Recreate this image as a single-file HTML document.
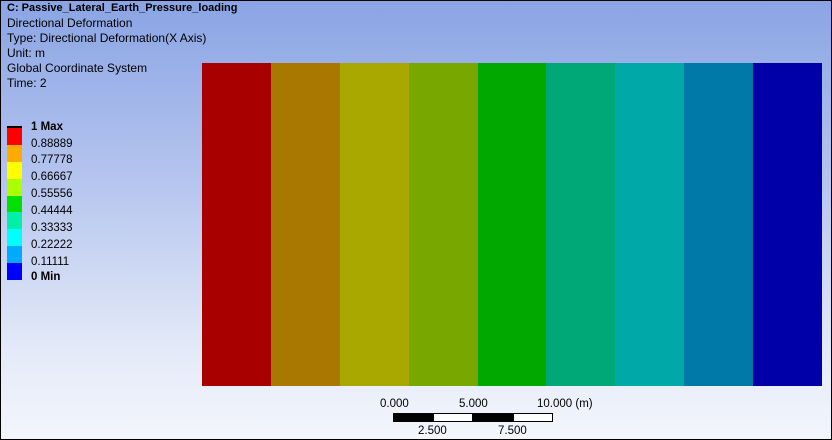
<!DOCTYPE html>
<html><head><style>
html,body{margin:0;padding:0}
body{width:832px;height:440px;position:relative;overflow:hidden;font-family:"Liberation Sans",sans-serif;
background:linear-gradient(to bottom,#8aa4e4 0%,#b4c4ee 40%,#e4eaf8 80%,#f4f6fc 100%);}
.frame{position:absolute;left:0;top:0;width:830px;height:438px;border:1px solid #000;}
.t{position:absolute;left:7px;font-size:12px;color:#000;line-height:15px;white-space:nowrap}
.plot{position:absolute;left:202px;top:63px;width:620px;height:323px;display:flex}
.plot div{flex:1}
.leg{position:absolute;left:7px;top:126px;width:15px}
.leg div{height:16.9px}
.lab{position:absolute;left:31px;font-size:11.5px;line-height:12px}
.sb{position:absolute;top:413px;height:9px;width:40px;box-sizing:border-box;border:1px solid #000}
.st{position:absolute;font-size:11.5px}
</style></head><body>
<div class="frame"></div>
<div class="t" style="top:1px;font-weight:bold;font-size:11px">C: Passive_Lateral_Earth_Pressure_loading</div>
<div class="t" style="top:16px">Directional Deformation</div>
<div class="t" style="top:31px">Type: Directional Deformation(X Axis)</div>
<div class="t" style="top:46px">Unit: m</div>
<div class="t" style="top:61px">Global Coordinate System</div>
<div class="t" style="top:76px">Time: 2</div>
<div class="plot">
<div style="background:#a80000"></div><div style="background:#a87800"></div><div style="background:#a8a800"></div>
<div style="background:#78a800"></div><div style="background:#00a800"></div><div style="background:#00a878"></div>
<div style="background:#00a8a8"></div><div style="background:#0078a8"></div><div style="background:#0000a8"></div>
</div>
<div class="leg" style="border-top:2px solid #000;">
<div style="background:#ff0000"></div><div style="background:#ffaa00"></div><div style="background:#ffff00"></div>
<div style="background:#aaff00"></div><div style="background:#00e000"></div><div style="background:#00f0aa"></div>
<div style="background:#00ffff"></div><div style="background:#00aaff"></div><div style="background:#0000ff"></div>
</div>
<div class="lab" style="top:121px;font-weight:bold">1 Max</div>
<div class="lab" style="top:138px">0.88889</div>
<div class="lab" style="top:154px">0.77778</div>
<div class="lab" style="top:171px">0.66667</div>
<div class="lab" style="top:188px">0.55556</div>
<div class="lab" style="top:205px">0.44444</div>
<div class="lab" style="top:222px">0.33333</div>
<div class="lab" style="top:239px">0.22222</div>
<div class="lab" style="top:256px">0.11111</div>
<div class="lab" style="top:271px;font-weight:bold">0 Min</div>
<div class="st" style="left:380px;top:398px">0.000</div>
<div class="st" style="left:459px;top:398px">5.000</div>
<div class="st" style="left:537px;top:398px">10.000 (m)</div>
<div class="sb" style="left:393px;background:#000"></div>
<div class="sb" style="left:433px;background:#fff"></div>
<div class="sb" style="left:473px;background:#000"></div>
<div class="sb" style="left:513px;background:#fff"></div>
<div class="st" style="left:418px;top:425px">2.500</div>
<div class="st" style="left:498px;top:425px">7.500</div>
</body></html>
